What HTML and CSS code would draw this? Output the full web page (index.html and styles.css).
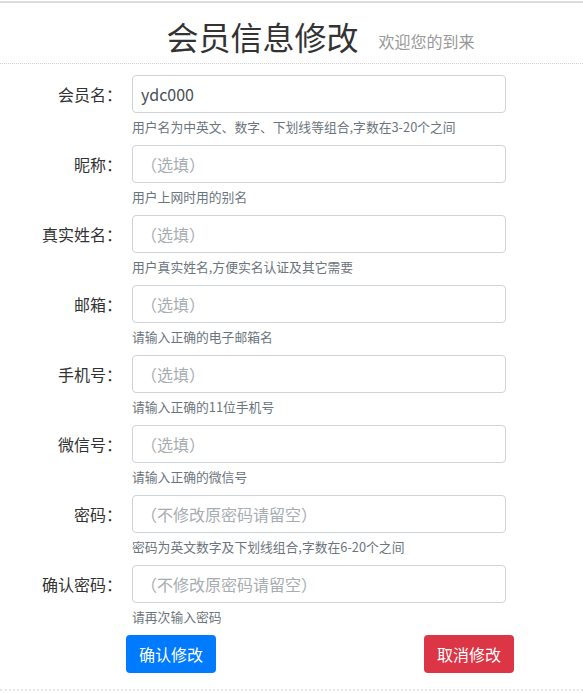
FILE: index.html
```html
<!DOCTYPE html>
<html lang="zh-CN">
<head>
<meta charset="utf-8">
<title>会员信息修改</title>
<link rel="stylesheet" href="styles.css">
</head>
<body>
<div class="page">
  <header class="header">
    <h1 class="title">会员信息修改</h1>
    <span class="subtitle">欢迎您的到来</span>
  </header>
  <form class="form">
    <div class="row">
      <label class="label">会员名：</label>
      <div class="field">
        <input class="input" type="text" value="ydc000">
        <div class="help">用户名为中英文、数字、下划线等组合,字数在3-20个之间</div>
      </div>
    </div>
    <div class="row">
      <label class="label">昵称：</label>
      <div class="field">
        <input class="input" type="text" placeholder="（选填）">
        <div class="help">用户上网时用的别名</div>
      </div>
    </div>
    <div class="row">
      <label class="label">真实姓名：</label>
      <div class="field">
        <input class="input" type="text" placeholder="（选填）">
        <div class="help">用户真实姓名,方便实名认证及其它需要</div>
      </div>
    </div>
    <div class="row">
      <label class="label">邮箱：</label>
      <div class="field">
        <input class="input" type="text" placeholder="（选填）">
        <div class="help">请输入正确的电子邮箱名</div>
      </div>
    </div>
    <div class="row">
      <label class="label">手机号：</label>
      <div class="field">
        <input class="input" type="text" placeholder="（选填）">
        <div class="help">请输入正确的11位手机号</div>
      </div>
    </div>
    <div class="row">
      <label class="label">微信号：</label>
      <div class="field">
        <input class="input" type="text" placeholder="（选填）">
        <div class="help">请输入正确的微信号</div>
      </div>
    </div>
    <div class="row">
      <label class="label">密码：</label>
      <div class="field">
        <input class="input" type="password" placeholder="（不修改原密码请留空）">
        <div class="help">密码为英文数字及下划线组合,字数在6-20个之间</div>
      </div>
    </div>
    <div class="row">
      <label class="label">确认密码：</label>
      <div class="field">
        <input class="input" type="password" placeholder="（不修改原密码请留空）">
        <div class="help">请再次输入密码</div>
      </div>
    </div>
    <div class="actions">
      <button type="button" class="btn btn-primary">确认修改</button>
      <button type="button" class="btn btn-danger">取消修改</button>
    </div>
  </form>
</div>
</body>
</html>
```

FILE: styles.css
```css
html, body {
  margin: 0;
  padding: 0;
  background: #fff;
}
body {
  font-family: "Noto Sans CJK SC", "Noto Sans", sans-serif;
  color: #333;
}
.page {
  margin-top: 1px;
  border-top: 2px solid #dcdcdc;
  border-bottom: 2px dotted #e6e6e6;
}
.header {
  height: 61px;
  box-sizing: border-box;
  border-bottom: 1px dotted #d0d0d0;
  display: flex;
  align-items: center;
  justify-content: center;
  padding-left: 58px;
  padding-top: 6px;
}
.title {
  margin: 0;
  font-size: 32px;
  font-weight: 400;
  color: #333;
  line-height: 40px;
}
.subtitle {
  margin-left: 20px;
  margin-top: 10px;
  font-size: 16px;
  color: #999;
}
.form {
  padding-top: 11px;
}
.row {
  display: grid;
  grid-template-columns: 122px 374px;
  column-gap: 10px;
  margin-bottom: 9px;
}
.label {
  text-align: right;
  font-size: 16px;
  line-height: 38px;
  height: 38px;
  color: #333;
}
.field {
  display: flex;
  flex-direction: column;
}
.input {
  box-sizing: border-box;
  height: 38px;
  width: 374px;
  border: 1px solid #ced4da;
  border-radius: 4px;
  padding: 0 8px;
  font-family: "Noto Sans CJK SC", "Noto Sans", sans-serif;
  font-size: 16px;
  color: #495057;
  outline: none;
}
.input::placeholder {
  color: #a8adb2;
}
.help {
  margin-top: 4px;
  font-size: 12.8px;
  line-height: 19px;
  color: #6c757d;
}
.actions {
  display: flex;
  justify-content: space-between;
  margin-left: 126px;
  width: 388px;
  margin-bottom: 16px;
}
.btn {
  height: 38px;
  width: 90px;
  border: none;
  border-radius: 4px;
  color: #fff;
  font-family: "Noto Sans CJK SC", sans-serif;
  font-size: 16px;
  padding: 0;
  cursor: pointer;
}
.btn-primary {
  background: #007bff;
}
.btn-danger {
  background: #dc3545;
}
```
